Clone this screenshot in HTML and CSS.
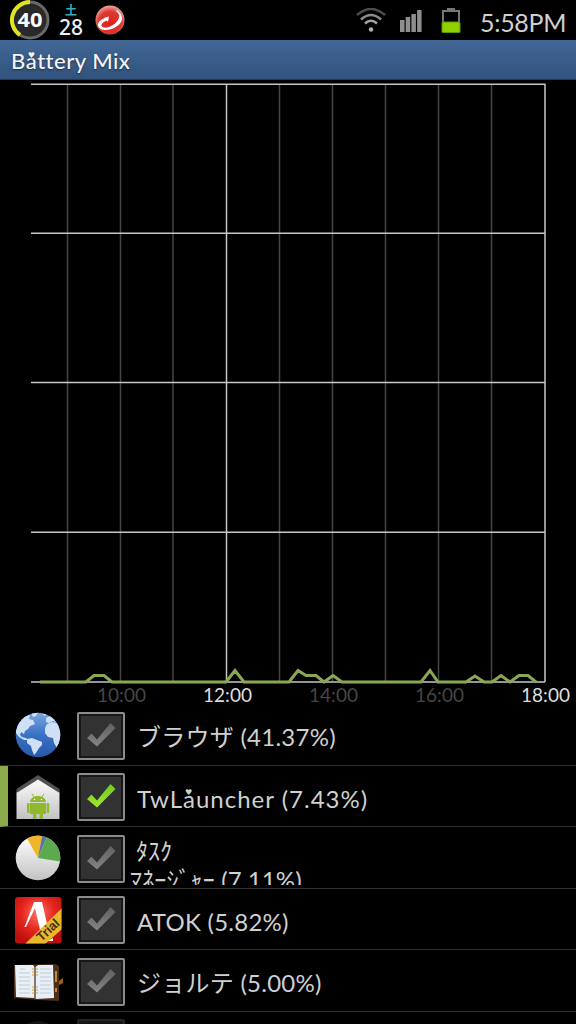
FILE: index.html
```html
<!DOCTYPE html>
<html lang="ja">
<head>
    <meta charset="UTF-8">
    <meta name="viewport" content="width=device-width, initial-scale=1.0">
    <title>Battery Mix</title>
    <link rel="stylesheet" href="styles.css">
</head>
<body>
    <svg class="defs" width="0" height="0">
        <defs>
            <linearGradient id="tickOff" x1="0" y1="0" x2="0" y2="1">
                <stop offset="0" stop-color="#606060"/>
                <stop offset="1" stop-color="#858585"/>
            </linearGradient>
            <linearGradient id="tickOn" x1="0" y1="0" x2="0" y2="1">
                <stop offset="0" stop-color="#70c828"/>
                <stop offset="1" stop-color="#a2e82c"/>
            </linearGradient>
            <symbol id="tick" viewBox="0 0 48 48">
                <path d="M10 26L14.500 21.500L20 27.500L33.500 11L38.500 16L20 34.500Z"/>
            </symbol>
        </defs>
    </svg>

    <div class="statusbar">
        <svg class="level" viewBox="0 0 40 40">
            <circle cx="20" cy="20" r="18" fill="#292929" stroke="#686868" stroke-width="3"/>
            <path d="M20 2A18 18 0 0 0 10 35" fill="none" stroke="#dfe51f" stroke-width="4"/>
            <text x="7.500" y="27" textLength="25" lengthAdjust="spacingAndGlyphs">40</text>
        </svg>
        <div class="date"><span class="weekday">土</span><span class="day">28</span></div>
        <svg class="trend" viewBox="0 0 30 30">
            <defs>
                <radialGradient id="redBall" cx=".5" cy=".6" r=".6">
                    <stop offset="0" stop-color="#e41e18"/>
                    <stop offset=".65" stop-color="#d93a33"/>
                    <stop offset="1" stop-color="#f5a698"/>
                </radialGradient>
            </defs>
            <circle cx="15" cy="15" r="14.500" fill="url(#redBall)"/>
            <path d="M22 5C28 9 29 16 23 20.500C16 26 5 27 3 21C2 17 7 13.500 12 12.500L13 15C7 17 5 20 7.500 22C12 24.500 20 20 23 15C25.500 11 24 8 21 6Z" fill="#fff"/>
            <path d="M9 13L14 11.500L13 17Z" fill="#fff"/>
        </svg>
        <div class="status-right">
            <svg class="wifi" viewBox="0 0 30 24">
                <g fill="none" stroke-width="2.600">
                    <path d="M1 7Q15 -5 29 7" stroke="#4d4d4d"/>
                    <path d="M5 11.500Q15 2.500 25 11.500" stroke="#8c8c8c"/>
                    <path d="M9 15.500Q15 10 21 15.500" stroke="#a3a3a3"/>
                </g>
                <circle cx="15" cy="21.500" r="2.200" fill="#b0b0b0"/>
            </svg>
            <svg class="signal" viewBox="0 0 22 22" fill="#8e8e8e">
                <path d="M0 10H4.500V22H0ZM5.700 7H10.200V22H5.700ZM11.400 4H15.900V22H11.400ZM17.100 0H21.600V22H17.100Z"/>
            </svg>
            <svg class="battery" viewBox="0 0 20 25">
                <path d="M2 14V3H18V14" fill="none" stroke="#777" stroke-width="2"/>
                <path d="M6 0H14V3H6Z" fill="#777"/>
                <rect x="1" y="14" width="18" height="10.500" rx="1" fill="#90d000" stroke="#629800"/>
            </svg>
            <span class="clock">5:58PM</span>
        </div>
    </div>

    <div class="titlebar"><h1>B<span class="heart">a</span>ttery Mix</h1></div>

    <svg class="chart" viewBox="0 80 576 624">
        <g stroke="#444" stroke-width="1.500">
            <path d="M67.500 84V682M120.500 84V682M173 84V682M279.500 84V682M332.500 84V682M385.500 84V682M438.500 84V682M491.500 84V682"/>
        </g>
        <g stroke="#c6c6c6" stroke-width="1.500" fill="none">
            <path d="M31 84.300H545.500M31 233.300H545M31 382.500H545M31 532.300H545M31 682H545M226.500 84V682M545 84V682"/>
        </g>
        <polyline class="usage" points="40,682 86,682 94,675.500 104,675.500 112,682 226,682 235,670.500 244,682 289,682 298,670.500 306,675.500 316,675.500 324,682 333,675.500 342,682 421,682 430,670.500 438,682 466,682 475,676 484,682 492,682 501,675.500 510,682 519,675.500 528,675.500 536,682"/>
        <g class="hours">
            <text x="97" y="701.500" textLength="49" class="dim">10:00</text>
            <text x="203" y="701.500" textLength="49">12:00</text>
            <text x="309" y="701.500" textLength="49" class="dim">14:00</text>
            <text x="415" y="701.500" textLength="49" class="dim">16:00</text>
            <text x="521" y="701.500" textLength="49">18:00</text>
        </g>
    </svg>

    <div class="apps">
        <div class="app">
            <svg class="icon" viewBox="0 0 48 48">
                <defs>
                    <linearGradient id="sea" x1="0" y1="0" x2="0" y2="1">
                        <stop offset="0" stop-color="#78a6df"/>
                        <stop offset=".5" stop-color="#3972c3"/>
                        <stop offset="1" stop-color="#2857aa"/>
                    </linearGradient>
                    <clipPath id="globe"><circle cx="24" cy="24" r="22.300"/></clipPath>
                </defs>
                <circle cx="24" cy="24" r="22.300" fill="url(#sea)"/>
                <g clip-path="url(#globe)" fill="#cfdff6">
                    <path d="M2 16L6 9L11 5L16 4L15 8L19 9L21 13L16 15L14 18L11 20L10 23L7 21L6 24L8 26L12 27L14 29L10 29L5 26L2 22Z"/>
                    <path d="M17 2L24 1L22 5L19 6Z"/>
                    <path d="M13 28L18 27L23 29L28 31L28 34L25 37L22 42L20 44L18 39L17 35L13 32Z"/>
                    <path d="M33 13L38 11L43 12L48 18L47 34L43 37L40 32L39 27L34 26L31 22L31 17Z"/>
                    <path d="M32 7L36 5L42 8L44 12L39 10L35 12L32 11ZM28 3L32 3L31 5Z"/>
                </g>
            </svg>
            <div class="check"><svg><use href="#tick" fill="url(#tickOff)"/></svg></div>
            <div class="name browser">ブラウザ <span class="pct">(41.37%)</span></div>
        </div>
        <div class="app selected">
            <svg class="icon" viewBox="0 0 48 48">
                <defs>
                    <linearGradient id="wall" x1="0" y1="0" x2="0" y2="1">
                        <stop offset="0" stop-color="#fff"/>
                        <stop offset="1" stop-color="#c2c2c2"/>
                    </linearGradient>
                </defs>
                <path d="M2.500 46V19L24 4L45.500 19V46Z" fill="url(#wall)"/>
                <path d="M2.500 20V16L24 2L45.500 16V20L24 6.500Z" fill="#515151"/>
                <g fill="#8fb82f">
                    <path d="M16 29C17 21 31 21 32 29ZM16 30H32V41H29V46H25.500V41H22.500V46H19V41H16Z"/>
                    <rect x="13" y="30" width="2.500" height="10" rx="1.200"/>
                    <rect x="32.700" y="30" width="2.500" height="10" rx="1.200"/>
                    <path d="M18 21L21 25M30 21L27 25" stroke="#8fb82f"/>
                </g>
                <circle cx="20.500" cy="26.500" r=".8" fill="#fff"/>
                <circle cx="27.500" cy="26.500" r=".8" fill="#fff"/>
            </svg>
            <div class="check"><svg><use href="#tick" fill="url(#tickOn)"/></svg></div>
            <div class="name launcher">TwL<span class="heart">a</span>uncher <span class="pct">(7.43%)</span></div>
        </div>
        <div class="app">
            <svg class="icon" viewBox="0 0 48 48">
                <circle cx="24" cy="24" r="22.300" fill="url(#wall)"/>
                <path d="M24 24L13 4.500A22.300 22.300 0 0 1 28 2Z" fill="#f2b529"/>
                <path d="M24 24L28 2A22.300 22.300 0 0 1 33 3.500Z" fill="#57799b"/>
                <path d="M24 24L33 3.500A22.300 22.300 0 0 1 46 27.500Z" fill="#5caa4d"/>
            </svg>
            <div class="check"><svg><use href="#tick" fill="url(#tickOff)"/></svg></div>
            <div class="name task"><span class="first">ﾀｽｸ</span><span class="second">ﾏﾈｰｼﾞｬｰ <span class="pct">(7.11%)</span></span></div>
        </div>
        <div class="app">
            <svg class="icon" viewBox="0 0 48 48">
                <defs>
                    <radialGradient id="atok" cx=".5" cy=".35" r=".65">
                        <stop offset="0" stop-color="#ff7468"/>
                        <stop offset=".55" stop-color="#e6261f"/>
                        <stop offset="1" stop-color="#bc100f"/>
                    </radialGradient>
                    <clipPath id="atokClip"><rect x="1" y="1" width="46.500" height="46.500" rx="3"/></clipPath>
                </defs>
                <rect x="1" y="1" width="46.500" height="46.500" rx="3" fill="url(#atok)"/>
                <path d="M20 6H28L34 32L26 34L21 12L12 31H10.500Z" fill="#fff"/>
                <g clip-path="url(#atokClip)">
                    <path d="M11 48L48 12V33L31 48Z" fill="#e9b82c"/>
                    <path d="M34 45L39 42V45Z" fill="#fff"/>
                    <text class="trial" transform="translate(27.500 46) rotate(-43)" textLength="26" lengthAdjust="spacingAndGlyphs">Trial</text>
                </g>
            </svg>
            <div class="check"><svg><use href="#tick" fill="url(#tickOff)"/></svg></div>
            <div class="name atok">ATOK <span class="pct">(5.82%)</span></div>
        </div>
        <div class="app">
            <svg class="icon" viewBox="0 0 48 48">
                <path d="M0 8L41 7L45 9V44L24 43L0 41Z" fill="#4d2f18"/>
                <path d="M1 8H19L20.500 10V41L2 40Z" fill="#e9f0f6"/>
                <path d="M21.500 10L24 8H39L40 41L21.500 42Z" fill="#e6eef8"/>
                <path d="M6 12H11M5 16H16M5 20H16M5 24H16M5 28H16M5 32H16M5 36H16M26 12H37M26 16H37M26 20H37M26 24H37M26 28H37M26 32H37M26 36H37" stroke="#b9c1ca" stroke-width=".8"/>
                <path d="M18 12H24M18 15H24M18 18H24M18 30H24M18 33H24M18 36H24" stroke="#d1a044" stroke-width="1.200"/>
                <path d="M21 9V42" stroke="#6c5034" stroke-width=".8"/>
                <path d="M42 14V25M42 31V35" stroke="#cc9646" stroke-width="1.800"/>
                <path d="M45 24L49 21V26L45 28Z" fill="#9b641f"/>
            </svg>
            <div class="check"><svg><use href="#tick" fill="url(#tickOff)"/></svg></div>
            <div class="name jorte">ジョルテ <span class="pct">(5.00%)</span></div>
        </div>
        <div class="app">
            <svg class="icon" viewBox="0 0 48 48"><circle cx="24" cy="24" r="22" fill="#121212"/></svg>
            <div class="check faded"></div>
        </div>
    </div>
</body>
</html>
```

FILE: styles.css
```css
* {
    box-sizing: border-box;
}
body {
    margin: 0;
    width: 576px;
    height: 1024px;
    overflow: hidden;
    background-color: #000;
    color: #d0d0d0;
    font-family: "Lato", "Noto Sans CJK JP", sans-serif;
}
svg {
    display: block;
    flex: none;
}
.defs {
    position: absolute;
}
.statusbar {
    height: 40px;
    padding-left: 10px;
    display: flex;
    align-items: center;
}
.level {
    width: 40px;
    height: 40px;
}
.level text {
    font: bold 20px "Noto Sans", sans-serif;
    fill: #fff;
}
.date {
    width: 28px;
    margin-left: 7px;
    padding-top: 1px;
    display: flex;
    flex-direction: column;
    align-items: center;
}
.weekday {
    color: #36aebb;
    font-size: 12px;
    font-weight: bold;
    line-height: 14px;
}
.day {
    color: #eee;
    font: 500 21px/19px "Noto Sans", sans-serif;
}
.trend {
    width: 30px;
    height: 30px;
    margin-left: 10px;
}
.status-right {
    margin-left: auto;
    padding-right: 10px;
    display: flex;
    align-items: center;
}
.wifi {
    width: 30px;
    height: 24px;
    margin-right: 14px;
}
.signal {
    width: 22px;
    height: 22px;
    margin: 2px 19px 0 0;
}
.battery {
    width: 20px;
    height: 25px;
    margin-right: 19px;
}
.clock {
    width: 86px;
    font-size: 25px;
    line-height: 40px;
    letter-spacing: -0.3px;
    white-space: nowrap;
    padding-top: 3px;
}
.titlebar {
    height: 40px;
    padding-left: 11px;
    background: linear-gradient(#426896, #31527c);
    border-bottom: 1px solid #203a5b;
}
h1 {
    margin: 0;
    color: #f4f4f4;
    font-size: 22px;
    font-weight: 500;
    line-height: 42px;
    letter-spacing: 0.5px;
    text-shadow: 0 1px 2px #1c2d45;
}
/* the small heart that sits on the letter a */
.heart {
    position: relative;
}
.heart::before {
    content: "♥";
    position: absolute;
    left: 2px;
    top: 4px;
    letter-spacing: 0;
    font: 8px/10px "DejaVu Sans", sans-serif;
}
.chart {
    width: 576px;
    height: 624px;
}
.usage {
    fill: none;
    stroke: #8aa853;
    stroke-width: 3;
}
.hours {
    font-size: 19px;
    fill: #ddd;
}
.hours .dim {
    fill: #454545;
}
.app {
    height: 61.5px;
    padding-left: 14px;
    border-bottom: 1px solid #303030;
    display: flex;
    align-items: center;
    overflow: hidden;
}
.selected {
    border-left: 8px solid #8aaa4c;
    padding-left: 6px;
}
.icon {
    width: 48px;
    height: 48px;
    margin-top: 2px;
    overflow: visible;
}
.check {
    flex: none;
    width: 48px;
    height: 48px;
    margin: 3px 0 0 15px;
    border: 2px solid #8b8b8b;
    border-radius: 2px;
    background-color: #323232;
    box-shadow: inset 0 0 0 2px #171717;
}
.check svg {
    width: 48px;
    height: 48px;
    margin: -2px;
}
.faded {
    border-color: #252525;
    background-color: #111;
}
.name {
    margin-left: 12px;
    padding-top: 6px;
    font-size: 24px;
    line-height: 32px;
    white-space: nowrap;
}
.browser {
    letter-spacing: 0.25px;
}
.launcher {
    letter-spacing: 1px;
}
.atok,
.jorte {
    letter-spacing: 0.25px;
}
.task {
    align-self: flex-start;
    display: flex;
    flex-direction: column;
    height: 58px;
    overflow: hidden;
    margin-left: 5px;
    padding-top: 9px;
    line-height: 29px;
}
.first {
    padding-left: 6px;
}
.second {
    letter-spacing: 0.15px;
}
.trial {
    font: bold 13px "Liberation Sans", sans-serif;
    fill: #443319;
}
```
